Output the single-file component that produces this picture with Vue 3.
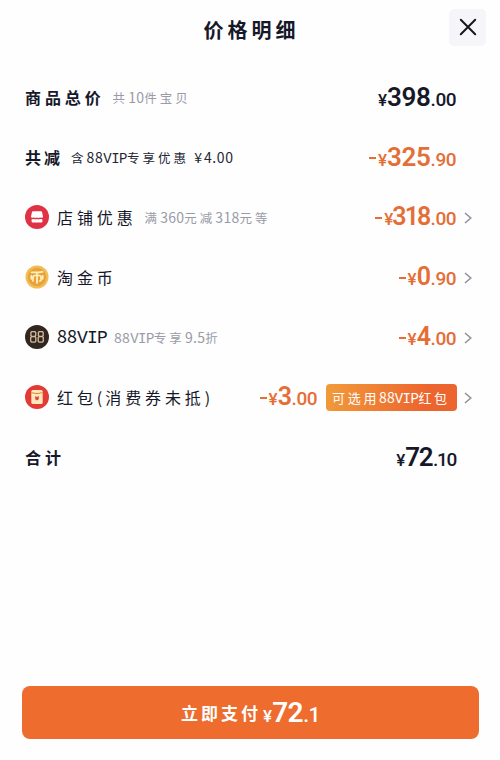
<script setup>
const rows = [
  { key: 'goods', kind: 'bold', label: '商品总价', note: '共10件宝贝', amount: ['', '398', '.00'] },
  { key: 'cut', kind: 'bold cut', label: '共减', note: '含88VIP专享优惠 ¥4.00', dark: true, amount: ['-', '325', '.90'] },
  { key: 'shop', kind: 'item', label: '店铺优惠', note: '满360元减318元等', amount: ['-', '318', '.00'] },
  { key: 'coin', kind: 'item', label: '淘金币', amount: ['-', '0', '.90'] },
  { key: 'vip', kind: 'item', label: '88VIP', note: '88VIP专享9.5折', amount: ['-', '4', '.00'] },
  { key: 'packet', kind: 'item', label: '红包(消费券未抵)', tag: '可选用88VIP红包', amount: ['-', '3', '.00'] },
  { key: 'total', kind: 'bold total', label: '合计', amount: ['', '72', '.10'] },
]

// Splits mixed text so Chinese, digits and capitals can each be spaced separately.
const runs = (text) =>
  (text.match(/[\u4e00-\u9fff]+|[A-Z]+|[0-9.]+|[^\u4e00-\u9fffA-Z0-9.]+/g) || []).map((t) => ({
    t,
    c: /[\u4e00-\u9fff]/.test(t) ? 'zh' : /[A-Z]/.test(t) ? 'cap' : /[0-9]/.test(t) ? 'num' : 'sym',
  }))
</script>

<template>
  <main class="sheet">
    <header class="head">
      <h1>价格明细</h1>
      <button class="close" aria-label="关闭">
        <svg width="18" height="18" viewBox="0 0 18 18"><path d="M1.8 1.8 16.2 16.2M16.2 1.8 1.8 16.2" /></svg>
      </button>
    </header>

    <section class="list">
      <div v-for="r in rows" :key="r.key" class="row" :class="[r.kind, r.key]">
        <svg v-if="r.key === 'shop'" class="icon" viewBox="0 0 24 24">
          <circle cx="12" cy="12" r="12" fill="#df3244" />
          <path d="M8 6.300h8q.8 0 1 .8l1 4.500q0 1.200-1.200 1.200l-1.800-.3-1.500.6-1.500-.6-1.500.6-1.500-.6-1.800.3Q6 12.800 6 11.600l1-4.500q.2-.8 1-.8ZM6.600 14.200l2.400-.3 1.500.6 1.500-.6 1.500.6 1.500-.6 2.400.3v2.200q0 1-1 1H7.600q-1 0-1-1Z" fill="#fff" />
        </svg>
        <svg v-else-if="r.key === 'coin'" class="icon" viewBox="0 0 24 24">
          <circle cx="12" cy="12" r="11.5" fill="#f3bd55" />
          <circle cx="12" cy="12" r="9.200" fill="#e9a239" />
          <path d="M6.500 7.300Q12 7.800 17.500 6.800M12 7.300V18M8 16v-3.500q0-2 2-2h4q2 0 2 2V15q0 1-1.500 1M6.300 10.800v3M17.700 10.800v3" fill="none" stroke="#fff0bd" stroke-width="1.700" stroke-linecap="round" />
        </svg>
        <svg v-else-if="r.key === 'vip'" class="icon" viewBox="0 0 24 24">
          <circle cx="12" cy="12" r="12" fill="#302721" />
          <g fill="none" stroke="#d5b99c" stroke-width="1.300">
            <path d="M6.700 6.700h3.200l.8.900v2.900l-1 1H6.900l-1-1V7.600ZM6.900 11.500h2.900l1 1v3.700l-.9.900H6.600l-.9-.9v-3.700Z" />
            <path d="M14.200 6.700h3.200l.8.900v2.900l-1 1h-2.800l-1-1V7.600ZM14.400 11.500h2.900l1 1v3.700l-.9.900h-3.300l-.9-.9v-3.700Z" />
          </g>
        </svg>
        <svg v-else-if="r.key === 'packet'" class="icon" viewBox="0 0 24 24">
          <circle cx="12" cy="12" r="12" fill="#e23a35" />
          <rect x="6.300" y="5" width="11.400" height="14" rx="1.500" fill="#ffe8bd" />
          <path d="M6.300 7.700Q12 9.500 17.700 7.700" fill="none" stroke="#d9843e" stroke-width="1" />
          <path d="m10.200 11 1.800 1 1.800-1v3.200L12 15.600l-1.800-1.400Z" fill="#df4935" />
        </svg>

        <span class="label"><span v-for="(s, i) in runs(r.label)" :key="i" :class="s.c">{{ s.t }}</span></span>
        <span v-if="r.note" class="note" :class="{ dark: r.dark }"><span v-for="(s, i) in runs(r.note)" :key="i" :class="s.c">{{ s.t }}</span></span>

        <span class="amount" :class="{ minus: r.amount[0] }"><i v-if="r.amount[0]" class="dash"></i><span class="yen">¥</span><b>{{ r.amount[1] }}</b><span class="cents">{{ r.amount[2] }}</span></span>
        <span v-if="r.tag" class="tag"><span v-for="(s, i) in runs(r.tag)" :key="i" :class="s.c">{{ s.t }}</span></span>
        <span class="arrow">
          <svg v-if="r.kind === 'item'" width="8" height="12" viewBox="0 0 8 12"><path d="m1 1 5.800 5L1 11" /></svg>
        </span>
      </div>
    </section>

    <button class="pay">
      <span class="pay-text">立即支付</span>
      <span class="pay-sum"><span class="yen">¥</span><b>72</b><span class="cents">.1</span></span>
    </button>
  </main>
</template>

<style>
body { background: #fff; }
</style>

<style scoped>
.sheet {
  box-sizing: border-box;
  width: 500px;
  height: 760px;
  padding: 8px 21px 21px 22px;
  display: flex;
  flex-direction: column;
  background: #fefefe;
  color: #16182a;
  font-family: "Noto Sans CJK SC", sans-serif;
  overflow: hidden;
}
button { border: 0; padding: 0; font-family: inherit; }
.head {
  height: 38px;
  margin-right: -7px;
  display: grid;
  grid-template-columns: 32px 1fr 37px;
  align-items: center;
}
h1 {
  grid-column: 2;
  margin: 5px 0 0;
  font-size: 20px;
  line-height: 30px;
  font-weight: 700;
  letter-spacing: 4px;
  text-align: center;
}
.close {
  width: 37px;
  height: 37px;
  border-radius: 5px;
  background: #f5f5fa;
  display: grid;
  place-items: center;
}
.close path { fill: none; stroke: #17171f; stroke-width: 2; stroke-linecap: round; }
.list { margin-top: 22px; padding-left: 3px; }
.row { height: 60px; display: flex; align-items: center; white-space: nowrap; }
.icon { width: 24px; height: 24px; flex: none; margin: -2px 8px 0 0; }
.label { font-size: 16px; line-height: 24px; margin-top: -3px; }
.label .zh { letter-spacing: 3.900px; }
.label .sym { letter-spacing: 3px; }
.label .num, .label .cap { font-size: 18px; }
.bold .label { font-weight: 700; }
.cut .label .zh { letter-spacing: 3px; }
.note { margin: -1px 0 0 8px; font-size: 12.500px; line-height: 24px; color: #999ba6; }
.vip .note { margin-left: 7px; }
.note.dark { color: #242634; }
.note .zh { letter-spacing: 3px; }
.note .num { font-size: 14px; letter-spacing: .3px; }
.note .cap { font-size: 14px; }
.note .sym { font-size: 14px; letter-spacing: 2px; }
.note.dark .num { letter-spacing: .600px; }
.cap { font-family: "Liberation Mono", monospace; letter-spacing: -.5px; }
.label .cap { letter-spacing: -.8px; }
.amount {
  margin-left: auto;
  display: flex;
  align-items: baseline;
  font-family: Roboto, sans-serif;
  font-weight: 500;
  line-height: 30px;
}
.minus { color: #e56e36; }
.amount b { font-size: 26px; font-weight: 600; letter-spacing: -.3px; }
.item .amount b { font-size: 25px; }
.shop .amount b { letter-spacing: -1.800px; margin-right: 1px; }
.shop .amount .yen { letter-spacing: -1px; }
.total .amount b { letter-spacing: -1.500px; margin-right: 1px; }
.total .amount .cents { letter-spacing: -1.300px; }
.yen { font-size: 17px; }
.cents { font-size: 19px; letter-spacing: -.5px; }
.dash { width: 7px; height: 2px; margin-right: 2px; background: currentColor; align-self: center; }
.tag {
  box-sizing: border-box;
  width: 131px;
  height: 27px;
  margin: -1px -1px 0 9px;
  padding-left: 6px;
  border-radius: 4px;
  background: linear-gradient(100deg, #f19b3a, #ed652e 75%);
  color: #fff;
  font-size: 13px;
  line-height: 26px;
}
.tag .zh { letter-spacing: 2.700px; }
.tag .num, .tag .cap { font-size: 14px; }
.arrow { width: 23px; flex: none; margin-top: -1px; display: flex; justify-content: center; }
.arrow path { fill: none; stroke: #8e9099; stroke-width: 1.500; }
.pay {
  height: 53px;
  margin-top: auto;
  border-radius: 8px;
  background: #ed6c2e;
  color: #fff;
  display: flex;
  align-items: center;
  justify-content: center;
  gap: 2px;
}
.pay-text { font-size: 17px; font-weight: 700; letter-spacing: 3px; }
.pay-sum { font-family: Roboto, sans-serif; font-weight: 500; }
.pay-sum b { font-size: 28px; font-weight: 600; letter-spacing: -.5px; }
.pay-sum .cents { font-size: 21px; }
</style>
